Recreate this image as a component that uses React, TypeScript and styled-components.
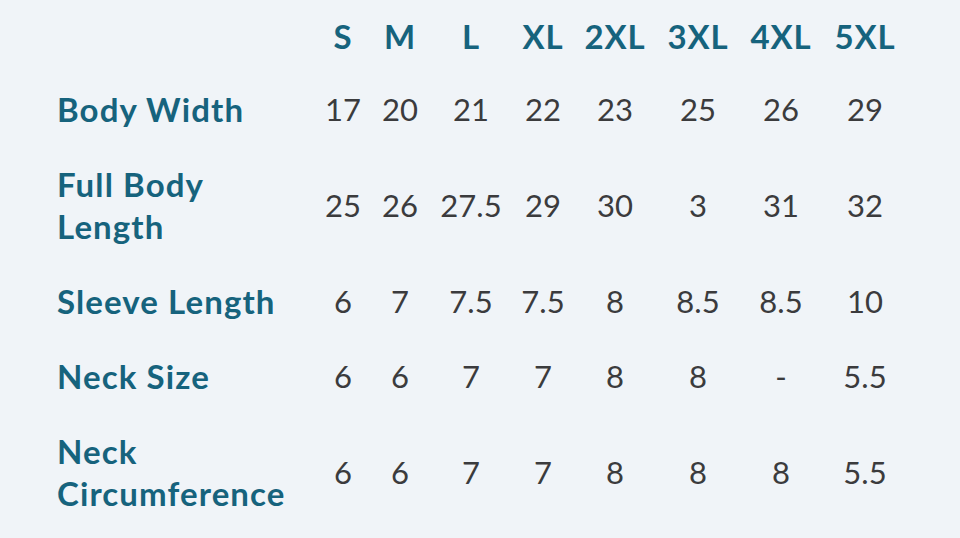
import React from "react";
import styled, { createGlobalStyle } from "styled-components";

const Global = createGlobalStyle`
  html, body { margin: 0; padding: 0; background: #f0f4f8; }
  body { font-family: "Lato", "Liberation Sans", sans-serif; }
`;

const Page = styled.div`
  width: 960px;
  height: 538px;
  background: #f0f4f8;
  overflow: hidden;
  box-sizing: border-box;
  padding-left: 57px;
`;

const Grid = styled.div`
  display: grid;
  grid-template-columns: 257.5px 57px 57px 85px 59px 85px 81px 85px 83px;
`;

const HeadCell = styled.div`
  height: 71px;
  display: flex;
  align-items: center;
  justify-content: center;
  font-weight: 700;
  font-size: 33px;
  letter-spacing: 0.9px;
  color: #16637d;
`;

const Label = styled.div<{ $tall?: boolean }>`
  height: ${(p) => (p.$tall ? 117 : 75)}px;
  display: flex;
  align-items: center;
  font-weight: 700;
  font-size: 33px;
  letter-spacing: 1.1px;
  line-height: 42px;
  color: #16637d;
  white-space: nowrap;
`;

const Value = styled.div<{ $tall?: boolean }>`
  height: ${(p) => (p.$tall ? 117 : 75)}px;
  display: flex;
  align-items: center;
  justify-content: center;
  font-weight: 400;
  font-size: 31px;
  color: #3b3b3d;
  white-space: nowrap;
`;

const sizes = ["S", "M", "L", "XL", "2XL", "3XL", "4XL", "5XL"];

const rows: { label: React.ReactNode; tall?: boolean; values: string[] }[] = [
  { label: "Body Width", values: ["17", "20", "21", "22", "23", "25", "26", "29"] },
  {
    label: (
      <>
        Full Body
        <br />
        Length
      </>
    ),
    tall: true,
    values: ["25", "26", "27.5", "29", "30", "3", "31", "32"],
  },
  { label: "Sleeve Length", values: ["6", "7", "7.5", "7.5", "8", "8.5", "8.5", "10"] },
  { label: "Neck Size", values: ["6", "6", "7", "7", "8", "8", "-", "5.5"] },
  {
    label: (
      <>
        Neck
        <br />
        Circumference
      </>
    ),
    tall: true,
    values: ["6", "6", "7", "7", "8", "8", "8", "5.5"],
  },
];

export default function App() {
  return (
    <Page>
      <Global />
      <Grid>
        <HeadCell />
        {sizes.map((s) => (
          <HeadCell key={s}>{s}</HeadCell>
        ))}
        {rows.map((r, i) => (
          <React.Fragment key={i}>
            <Label $tall={r.tall}>
              <span>{r.label}</span>
            </Label>
            {r.values.map((v, j) => (
              <Value key={j} $tall={r.tall}>
                {v}
              </Value>
            ))}
          </React.Fragment>
        ))}
      </Grid>
    </Page>
  );
}
